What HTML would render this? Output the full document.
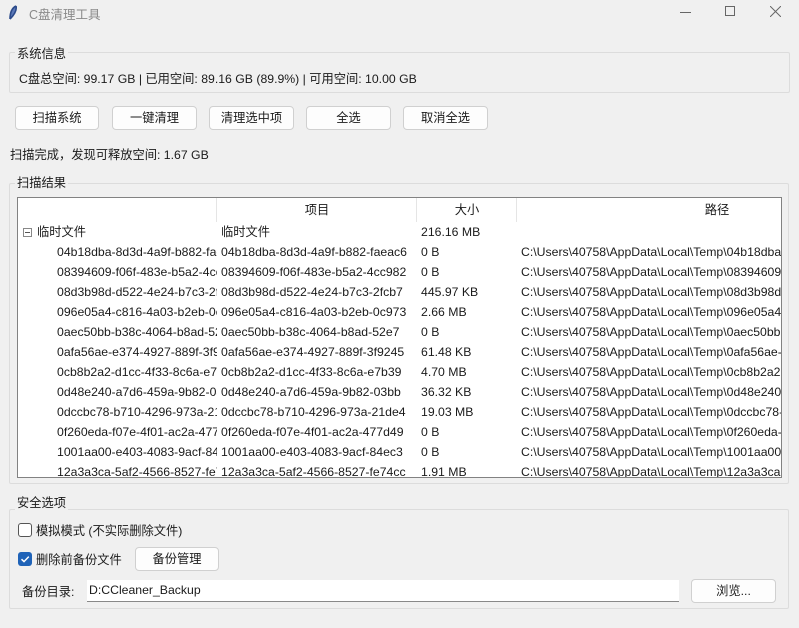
<!DOCTYPE html>
<html><head><meta charset="utf-8"><style>
*{box-sizing:border-box;margin:0;padding:0}
body{width:799px;height:628px;background:#f0f0f0;font-family:"Liberation Sans","Noto Sans CJK SC",sans-serif;font-size:12.25px;color:#1a1a1a;position:relative;overflow:hidden}
.a{position:absolute;white-space:nowrap}
.frame{position:absolute;border:1px solid #dcdcdc;border-radius:2px}
.lbl{position:absolute;background:#f0f0f0;padding:0 2px;white-space:nowrap}
.btn{position:absolute;height:24px;background:#fdfdfd;border:1px solid #d0d0d0;border-radius:4px;text-align:center;line-height:22px}
.tree{position:absolute;left:17px;top:197px;width:765px;height:281px;background:#fff;border:1px solid #828282;overflow:hidden}
.row{position:absolute;left:0;height:20px;width:100%;line-height:20px}
.c{position:absolute;top:0;overflow:hidden;white-space:nowrap}
</style></head><body>
<svg class="a" style="left:8px;top:5px" width="10" height="16" viewBox="0 0 10 16"><path d="M8 1 C4 3 2 8 2 14 M8 1 C9 5 6 10 2 14" stroke="#2b4a8a" stroke-width="1.6" fill="#5a78b8"/></svg>
<div class="a" style="left:29px;top:4px;color:#8a8a8a;font-size:12.5px">C盘清理工具</div>
<div class="a" style="left:680px;top:12px;width:11px;height:1px;background:#666"></div>
<div class="a" style="left:725px;top:6px;width:10px;height:10px;border:1px solid #666"></div>
<svg class="a" style="left:770px;top:6px" width="11" height="11"><path d="M0 0L11 11M11 0L0 11" stroke="#666" stroke-width="1"/></svg>

<div class="frame" style="left:9px;top:52px;width:781px;height:41px"></div>
<div class="lbl" style="left:15px;top:44px">系统信息</div>
<div class="a" style="left:19px;top:69px">C盘总空间: 99.17 GB | 已用空间: 89.16 GB (89.9%) | 可用空间: 10.00 GB</div>

<div class="btn" style="left:15px;top:106px;width:84px">扫描系统</div>
<div class="btn" style="left:112px;top:106px;width:85px">一键清理</div>
<div class="btn" style="left:209px;top:106px;width:85px">清理选中项</div>
<div class="btn" style="left:306px;top:106px;width:85px">全选</div>
<div class="btn" style="left:403px;top:106px;width:85px">取消全选</div>

<div class="a" style="left:10px;top:145px">扫描完成，发现可释放空间: 1.67 GB</div>

<div class="frame" style="left:9px;top:183px;width:780px;height:301px"></div>
<div class="lbl" style="left:15px;top:173px">扫描结果</div>
<div class="tree">
 <div class="row" style="top:0;height:24px;line-height:24px">
  <div class="c" style="left:198px;width:1px;height:24px;background:#e5e5e5"></div>
  <div class="c" style="left:199px;width:200px;text-align:center">项目</div>
  <div class="c" style="left:398px;width:1px;height:24px;background:#e5e5e5"></div>
  <div class="c" style="left:399px;width:100px;text-align:center">大小</div>
  <div class="c" style="left:498px;width:1px;height:24px;background:#e5e5e5"></div>
  <div class="c" style="left:499px;width:400px;text-align:center">路径</div>
 </div>
 <div class="row" style="top:24px">
  <div class="c" style="left:5px;top:6px;width:9px;height:9px;border:1px solid #888;font-size:0"><div style="position:absolute;left:1px;top:3px;width:5px;height:1px;background:#555"></div></div>
  <div class="c" style="left:19px">临时文件</div>
  <div class="c" style="left:203px">临时文件</div>
  <div class="c" style="left:403px">216.16 MB</div>
 </div>
 <div id="rows"></div>
</div>
<script>
var d=[["04b18dba-8d3d-4a9f-b882-faeac6","0 B"],["08394609-f06f-483e-b5a2-4cc982","0 B"],["08d3b98d-d522-4e24-b7c3-2fcb7","445.97 KB"],["096e05a4-c816-4a03-b2eb-0c973","2.66 MB"],["0aec50bb-b38c-4064-b8ad-52e7","0 B"],["0afa56ae-e374-4927-889f-3f9245","61.48 KB"],["0cb8b2a2-d1cc-4f33-8c6a-e7b39","4.70 MB"],["0d48e240-a7d6-459a-9b82-03bb","36.32 KB"],["0dccbc78-b710-4296-973a-21de4","19.03 MB"],["0f260eda-f07e-4f01-ac2a-477d49","0 B"],["1001aa00-e403-4083-9acf-84ec3","0 B"],["12a3a3ca-5af2-4566-8527-fe74cc","1.91 MB"]];
var h="";d.forEach(function(r,i){var t=44+i*20;h+='<div class="row" style="top:'+t+'px"><div class="c" style="left:39px;width:160px">'+r[0]+'</div><div class="c" style="left:203px;width:196px">'+r[0]+'</div><div class="c" style="left:403px">'+r[1]+'</div><div class="c" style="left:503px">C:\\Users\\40758\\AppData\\Local\\Temp\\'+r[0]+'</div></div>';});
document.getElementById("rows").outerHTML=h;
</script>

<div class="frame" style="left:9px;top:509px;width:780px;height:100px"></div>
<div class="lbl" style="left:15px;top:493px">安全选项</div>
<div class="a" style="left:18px;top:523px;width:14px;height:14px;border:1px solid #555;border-radius:3px;background:#fff"></div>
<div class="a" style="left:36px;top:521px">模拟模式 (不实际删除文件)</div>
<div class="a" style="left:18px;top:552px;width:14px;height:14px;border-radius:3px;background:#1f63b8"><svg width="14" height="14"><path d="M3.5 7.2L6 9.6L10.8 4.6" stroke="#fff" stroke-width="1.5" fill="none"/></svg></div>
<div class="a" style="left:36px;top:550px">删除前备份文件</div>
<div class="btn" style="left:135px;top:547px;width:84px">备份管理</div>
<div class="a" style="left:22px;top:582px">备份目录:</div>
<div class="a" style="left:87px;top:580px;width:592px;height:22px;background:#fff;border-bottom:1px solid #888;padding-left:2px;line-height:21px">D:CCleaner_Backup</div>
<div class="btn" style="left:691px;top:579px;width:85px">浏览...</div>
</body></html>
